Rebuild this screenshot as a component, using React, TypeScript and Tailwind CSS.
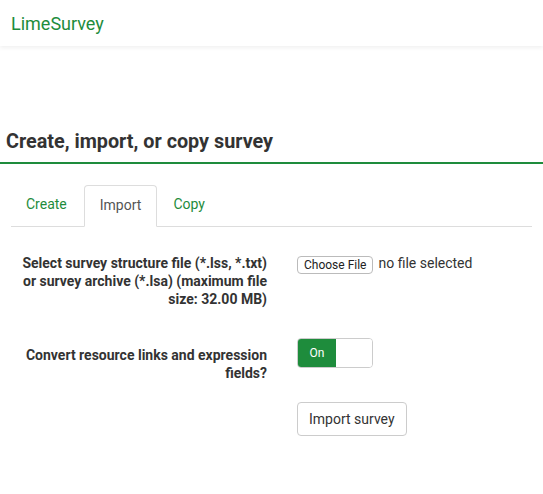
export default function App() {
  return (
    <div className="min-h-[494px] bg-white text-[#333]" style={{ fontFamily: 'Roboto, "Liberation Sans", sans-serif' }}>
      <div className="flex h-[46px] items-center bg-white px-[11px] shadow-[0_2px_4px_rgba(0,0,0,0.06)]">
        <span className="text-[18px] text-[#1e8c3c]">LimeSurvey</span>
      </div>

      <div className="mt-[82px] border-b-2 border-[#1e8c3c] px-[6px] pb-[7px]">
        <h1 className="text-[19.8px] font-bold leading-[27px] text-[#333]">Create, import, or copy survey</h1>
      </div>

      <div className="mx-[11px] mt-[21px] flex border-b border-[#ddd]">
        <a className="px-[15px] pb-[11px] pt-[11px] text-[14px] leading-[17px] text-[#1e8c3c]">Create</a>
        <a className="-mb-px ml-[2px] rounded-t-[4px] border border-b-white border-[#ddd] px-[15px] pb-[12px] pt-[11px] text-[14px] leading-[17px] text-[#555]">
          Import
        </a>
        <a className="px-[16px] pb-[11px] pt-[11px] text-[14px] leading-[17px] text-[#1e8c3c]">Copy</a>
      </div>

      <div className="mt-[27px] flex flex-col">
        <div className="flex">
          <div className="w-[267px] shrink-0 pl-[20px] text-right text-[14px] font-bold leading-[18px] text-[#333]">
            Select survey structure file (*.lss, *.txt) or survey archive (*.lsa) (maximum file size: 32.00 MB)
          </div>
          <div className="ml-[30px] flex items-start gap-[5px]">
            <button className="mt-[2px] h-[18px] rounded-[4px] border border-[#bbb] bg-white px-[6px] text-[12px] leading-[16px] text-[#222]">
              Choose File
            </button>
            <span className="text-[14px] leading-[18px] text-[#333]">no file selected</span>
          </div>
        </div>

        <div className="mt-[38px] flex">
          <div className="w-[267px] shrink-0 pl-[20px] text-right text-[14px] font-bold leading-[18px] text-[#333]">
            Convert resource links and expression fields?
          </div>
          <div className="ml-[30px] mt-[-8px]">
            <div className="flex h-[30px] w-[76px] overflow-hidden rounded-[4px] border border-[#ccc]">
              <div className="flex w-[38px] items-center justify-center bg-[#1e8c3c] text-[12px] text-white">On</div>
              <div className="flex-1 bg-white" />
            </div>
          </div>
        </div>

        <div className="mt-[20px] flex">
          <div className="w-[267px] shrink-0" />
          <button className="ml-[30px] h-[34px] rounded-[4px] border border-[#ccc] bg-white px-[11px] text-[14px] text-[#333]">
            Import survey
          </button>
        </div>
      </div>
    </div>
  );
}
